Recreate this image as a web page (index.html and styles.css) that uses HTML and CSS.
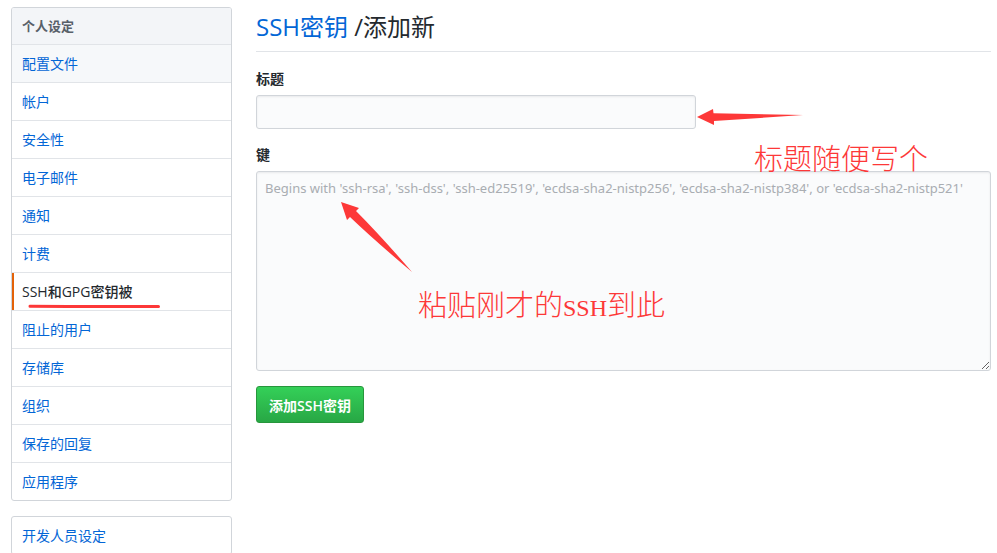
FILE: index.html
```html
<!DOCTYPE html>
<html lang="zh-CN">
<head>
<meta charset="utf-8">
<meta name="viewport" content="width=device-width, initial-scale=1">
<title>SSH密钥</title>
<link rel="stylesheet" href="styles.css">
</head>
<body>
<div class="page">
  <aside class="sidebar">
    <nav class="menu" aria-labelledby="menu-heading">
      <h2 class="menu-heading" id="menu-heading">个人设定</h2>
      <a class="menu-item hovered" href="#">配置文件</a>
      <a class="menu-item" href="#">帐户</a>
      <a class="menu-item" href="#">安全性</a>
      <a class="menu-item" href="#">电子邮件</a>
      <a class="menu-item" href="#">通知</a>
      <a class="menu-item" href="#">计费</a>
      <a class="menu-item selected" href="#" aria-current="page">SSH和GPG密钥被
        <svg class="underline" viewBox="0 0 133 5" aria-hidden="true"><path d="M2 2.2 L40 2.6 L80 2.4 L130.500 2.4" /></svg>
      </a>
      <a class="menu-item" href="#">阻止的用户</a>
      <a class="menu-item" href="#">存储库</a>
      <a class="menu-item" href="#">组织</a>
      <a class="menu-item" href="#">保存的回复</a>
      <a class="menu-item" href="#">应用程序</a>
    </nav>
    <nav class="menu">
      <a class="menu-item" href="#">开发人员设定</a>
    </nav>
  </aside>
  <main class="content">
    <h1 class="title"><a href="#">SSH密钥</a> /添加新</h1>
    <form class="key-form">
      <div class="field">
        <label for="key-title">标题</label>
        <div class="title-row">
          <input class="control title-input" id="key-title" type="text">
          <svg class="arrow-left" viewBox="0 0 106 18" aria-hidden="true"><path d="M0 9 L16 1 L16.500 5.300 L106 7 L17 13 L17 17 Z"/></svg>
          <span class="note title-note">标题随便写个</span>
        </div>
      </div>
      <div class="field key-field">
        <label for="key-body">键</label>
        <textarea class="control key-input" id="key-body" placeholder="Begins with 'ssh-rsa', 'ssh-dss', 'ssh-ed25519', 'ecdsa-sha2-nistp256', 'ecdsa-sha2-nistp384', or 'ecdsa-sha2-nistp521'"></textarea>
        <svg class="arrow-up" viewBox="0 0 71 70" aria-hidden="true"><path d="M0 0 L18 6 L15 9 Q39 33 71 70 Q33 38 9 15 L6 18 Z"/></svg>
        <span class="note key-note">粘贴刚才的<span class="latin">SSH</span>到此</span>
      </div>
      <button class="submit" type="button">添加SSH密钥</button>
    </form>
  </main>
</div>
</body>
</html>
```
FILE: styles.css
```css
* { box-sizing: border-box; }

body {
  margin: 0;
  background: #fff;
  color: #24292e;
  font: 14px/20px "Open Sans", "Noto Sans CJK SC", sans-serif;
}

a { color: #0366d6; text-decoration: none; }

.page {
  display: flex;
  align-items: flex-start;
  gap: 24px;
  padding: 7px 6px 0 11px;
}

.sidebar { flex: 0 0 221px; }

.menu {
  margin-bottom: 15px;
  border: 1px solid #d1d5da;
  border-radius: 3px;
  overflow: hidden;
}

.menu-heading,
.menu-item {
  display: block;
  margin: 0;
  padding: 9px 10px 8px;
  border-bottom: 1px solid #e1e4e8;
}

.menu-heading {
  padding: 8px 10px;
  background: #f3f5f8;
  color: #586069;
  font-size: 13px;
  font-weight: 600;
  line-height: 20px;
}

.menu-item:last-child { border-bottom: 0; }
.menu-item.hovered { background: #f6f8fa; }

.menu-item.selected {
  position: relative;
  color: #24292e;
  font-weight: 500;
  box-shadow: inset 2px 0 #e36209;
}

.underline {
  position: absolute;
  left: 16px;
  bottom: 1px;
  width: 133px;
  height: 5px;
  fill: none;
  stroke: #fd3838;
  stroke-width: 3;
  stroke-linecap: round;
}

.content { flex: 1; min-width: 0; }

.title {
  margin: 0 0 17px;
  padding: 2px 0 6px;
  border-bottom: 1px solid #e1e4e8;
  font-size: 24px;
  font-weight: 400;
  line-height: 36px;
}

.field { margin-bottom: 16px; }
.key-field { position: relative; margin-bottom: 15px; }

.field label {
  display: block;
  margin-bottom: 6px;
  font-weight: 600;
}

.title-row { position: relative; z-index: 1; }

.control {
  display: block;
  margin: 0;
  padding: 6px 8px;
  border: 1px solid #d1d5da;
  border-radius: 3px;
  background: #fafbfc;
  box-shadow: inset 0 1px 2px rgba(27, 31, 35, 0.075);
  color: #24292e;
  font: inherit;
}

.control::placeholder { color: #a9adb2; opacity: 1; }

.title-input { width: 440px; max-width: 100%; height: 34px; }

.key-input {
  width: 100%;
  height: 200px;
  font-family: "Noto Sans", "Noto Sans CJK SC", sans-serif;
  font-size: 13px;
  resize: vertical;
}

.submit {
  padding: 9px 12px 6px;
  border: 1px solid #27963c;
  border-radius: 3px;
  background: linear-gradient(#34d058, #28a745);
  color: #fff;
  font: 600 14px/20px "Open Sans", "Noto Sans CJK SC", sans-serif;
}

.note {
  position: absolute;
  color: #fd3838;
  font: 29px/36px "Liberation Serif", "Noto Sans CJK SC", serif;
  font-weight: 300;
  white-space: nowrap;
  pointer-events: none;
}

.latin { font-size: 24px; }

.title-note { left: 498px; top: 47px; }
.key-note { left: 162px; top: 143px; }

.arrow-left,
.arrow-up {
  position: absolute;
  fill: #fd3838;
  pointer-events: none;
}

.arrow-left { left: 441px; top: 13px; width: 106px; height: 18px; }
.arrow-up { left: 85px; top: 57px; width: 71px; height: 70px; }
```
